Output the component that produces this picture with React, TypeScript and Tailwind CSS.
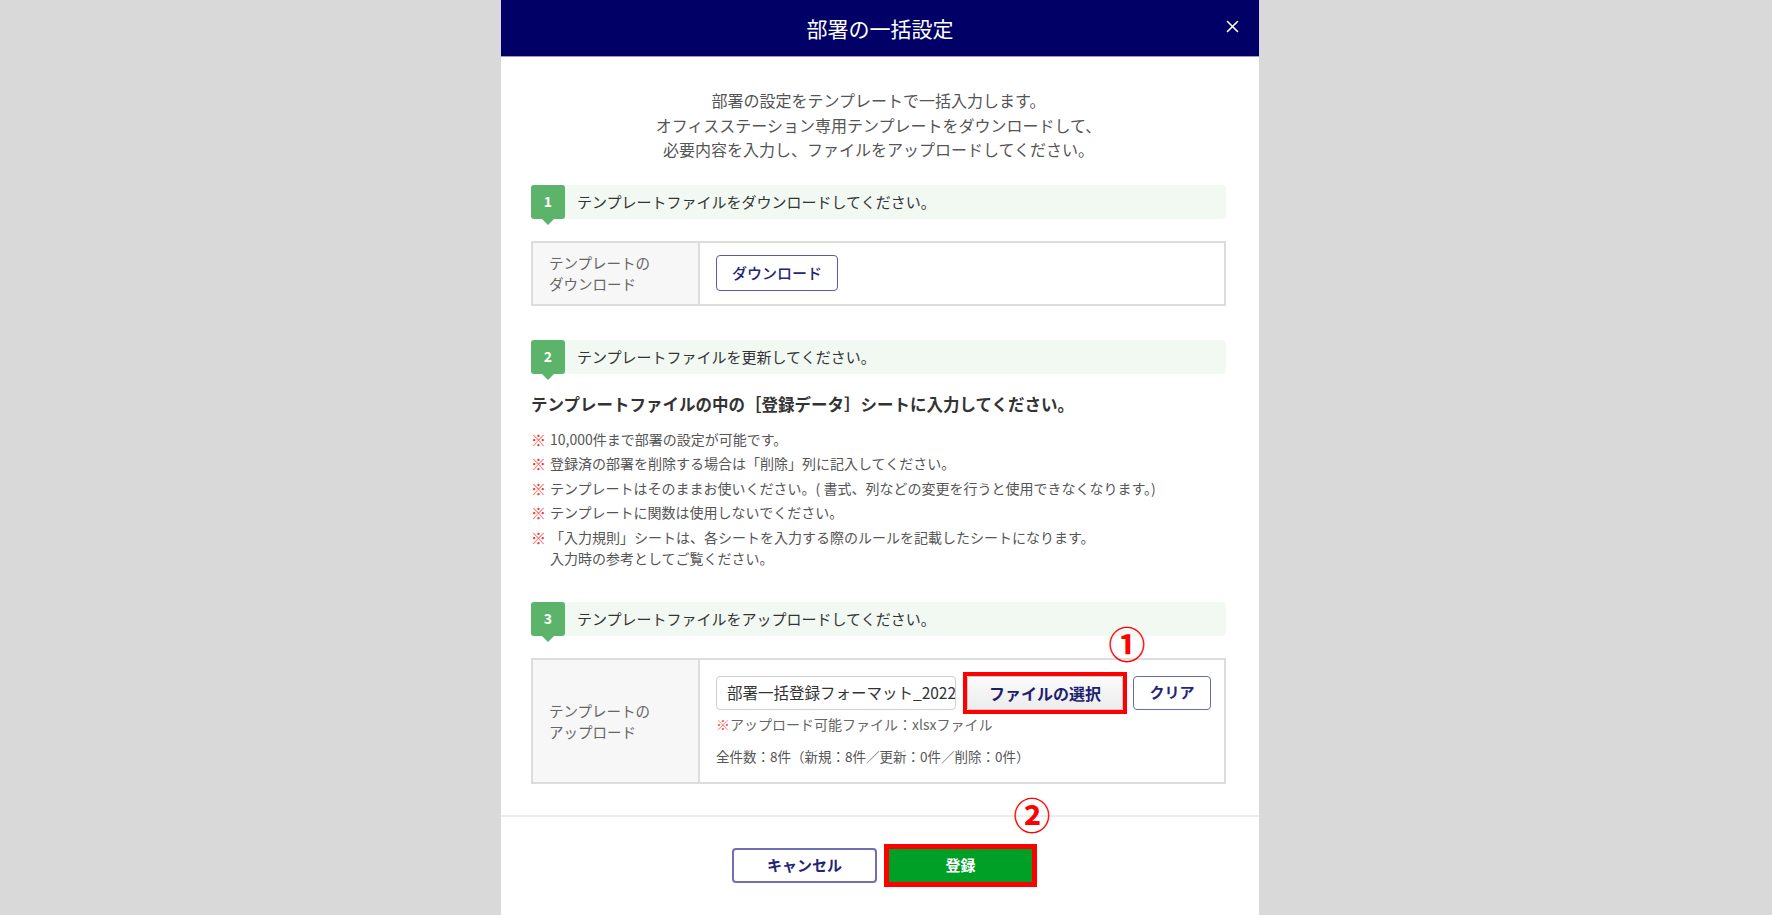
import React from "react";

function StepHeader({ n, text, className }: { n: number; text: string; className?: string }) {
  return (
    <div className={"flex h-[34px] items-center rounded-[4px] bg-[#f2f8f2] " + (className ?? "")}>
      <div className="relative flex h-[34px] w-[34px] shrink-0 items-center justify-center rounded-[3px] bg-[#5cb46a] text-[14px] font-bold text-white">
        {n}
        <span className="absolute bottom-[-6px] left-1/2 h-0 w-0 -translate-x-1/2 border-l-[6px] border-r-[6px] border-t-[6px] border-l-transparent border-r-transparent border-t-[#5cb46a]" />
      </div>
      <div className="ml-[12px] text-[15px] leading-[20px] text-[#333]">{text}</div>
    </div>
  );
}

function Note({ children }: { children: React.ReactNode }) {
  return (
    <div className="flex">
      <span className="w-[19px] shrink-0 text-[15px] font-bold text-[#ee3a33]">※</span>
      <div>{children}</div>
    </div>
  );
}

export default function App() {
  return (
    <div className="flex h-[915px] w-full overflow-hidden bg-[#d9d9d9] pl-[501px] font-['Noto_Sans_CJK_JP','Noto_Sans',sans-serif]">
      <div className="flex h-full w-[758px] flex-col bg-white">
        {/* header */}
        <div className="relative flex h-[57px] shrink-0 items-center justify-center border-b border-[#9a9ad0] bg-[#000066]">
          <div className="text-[21px] leading-[28px] text-white">部署の一括設定</div>
          <svg className="absolute right-[20px] top-[20px]" width="13" height="13" viewBox="0 0 13 13">
            <path d="M1.5 1.5 L11.5 11.5 M11.5 1.5 L1.5 11.5" stroke="#ffffff" strokeWidth="1.6" strokeLinecap="round" />
          </svg>
        </div>

        {/* body */}
        <div className="pl-[30px] pr-[33px] pt-[31px]">
          <div className="text-center text-[16px] leading-[24.5px] text-[#555]">
            <div>部署の設定をテンプレートで一括入力します。</div>
            <div>オフィスステーション専用テンプレートをダウンロードして、</div>
            <div>必要内容を入力し、ファイルをアップロードしてください。</div>
          </div>

          <StepHeader n={1} text="テンプレートファイルをダウンロードしてください。" className="mt-[23px]" />

          <div className="mt-[22px] flex h-[65px] border-2 border-[#dcdcdc]">
            <div className="flex w-[167px] shrink-0 items-center border-r-2 border-[#dcdcdc] bg-[#f7f7f7] pl-[16px] text-[14.5px] leading-[21px] text-[#666]">
              <div>
                テンプレートの
                <br />
                ダウンロード
              </div>
            </div>
            <div className="flex flex-1 items-center pl-[16px]">
              <button className="flex h-[36px] w-[122px] items-center justify-center rounded-[4px] border-[1.5px] border-[#5a5aa8] bg-white text-[15px] font-medium text-[#23237a]">
                ダウンロード
              </button>
            </div>
          </div>

          <StepHeader n={2} text="テンプレートファイルを更新してください。" className="mt-[34px]" />

          <div className="mt-[18px] text-[16.5px] font-bold leading-[24px] text-[#333]">
            テンプレートファイルの中の［登録データ］シートに入力してください。
          </div>

          <div className="mt-[13px] flex flex-col gap-[3.5px] text-[14px] leading-[21px] text-[#555]">
            <Note>10,000件まで部署の設定が可能です。</Note>
            <Note>登録済の部署を削除する場合は「削除」列に記入してください。</Note>
            <Note>テンプレートはそのままお使いください。( 書式、列などの変更を行うと使用できなくなります。)</Note>
            <Note>テンプレートに関数は使用しないでください。</Note>
            <Note>
              「入力規則」シートは、各シートを入力する際のルールを記載したシートになります。
              <br />
              入力時の参考としてご覧ください。
            </Note>
          </div>

          <StepHeader n={3} text="テンプレートファイルをアップロードしてください。" className="mt-[33px]" />

          <div className="mt-[22px] flex h-[126px] border-2 border-[#dcdcdc]">
            <div className="flex w-[167px] shrink-0 items-center border-r-2 border-[#dcdcdc] bg-[#f7f7f7] pl-[16px] text-[14.5px] leading-[21px] text-[#666]">
              <div>
                テンプレートの
                <br />
                アップロード
              </div>
            </div>
            <div className="flex-1 pl-[16px] pt-[16px]">
              <div className="flex items-center">
                <div className="flex h-[34px] w-[240px] items-center overflow-hidden whitespace-nowrap rounded-[4px] border border-[#cfcfcf] bg-white pl-[10px] text-[15.5px] text-[#333]">
                  部署一括登録フォーマット_20221
                </div>
                <div className="relative ml-[11px]">
                  <button className="flex h-[34px] w-[156px] items-center justify-center rounded-[2px] border border-[#c8c8c8] bg-gradient-to-b from-[#fbfbfb] to-[#ececec] text-[16px] font-bold text-[#1e1e6e]">
                    ファイルの選択
                  </button>
                  <div className="pointer-events-none absolute -inset-[4px] border-[4px] border-[#ff0000]" />
                  <div className="absolute left-[calc(100%-16px)] top-[-52px] flex h-[40px] w-[40px] items-center justify-center text-[37px] font-bold leading-none text-[#ff0000]">
                    ①
                  </div>
                </div>
                <button className="ml-[10px] flex h-[34px] w-[78px] items-center justify-center rounded-[4px] border-[1.5px] border-[#6a6ab0] bg-white text-[15px] font-bold text-[#23237a]">
                  クリア
                </button>
              </div>
              <div className="mt-[4px] text-[14px] leading-[20px] text-[#666]">
                <span className="text-[#ff5050]">※</span>アップロード可能ファイル：xlsxファイル
              </div>
              <div className="mt-[12px] text-[13.5px] leading-[20px] text-[#555]">
                全件数：8件（新規：8件／更新：0件／削除：0件）
              </div>
            </div>
          </div>
        </div>

        {/* footer */}
        <div className="mt-[31px] flex justify-center gap-[11px] border-t-2 border-[#ececec] pl-[5px] pt-[31px]">
          <button className="flex h-[35px] w-[145px] items-center justify-center rounded-[4px] border-2 border-[#7070b4] bg-white text-[15px] font-bold text-[#23237a]">
            キャンセル
          </button>
          <div className="relative">
            <button className="flex h-[35px] w-[145px] items-center justify-center bg-[#00a026] text-[15px] font-bold text-white">
              登録
            </button>
            <div className="pointer-events-none absolute -inset-[4px] border-[5px] border-[#ff0000]" />
            <div className="absolute left-[calc(100%-21px)] top-[-53px] flex h-[40px] w-[40px] items-center justify-center text-[37px] font-bold leading-none text-[#ff0000]">
              ②
            </div>
          </div>
        </div>
      </div>
    </div>
  );
}
